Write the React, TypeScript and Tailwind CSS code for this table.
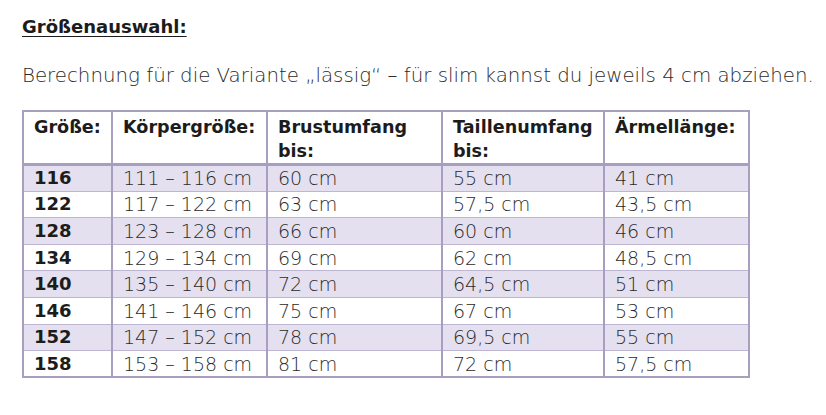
const rows: Array<[string, string, string, string, string]> = [
  ["116", "111 – 116 cm", "60 cm", "55 cm", "41 cm"],
  ["122", "117 – 122 cm", "63 cm", "57,5 cm", "43,5 cm"],
  ["128", "123 – 128 cm", "66 cm", "60 cm", "46 cm"],
  ["134", "129 – 134 cm", "69 cm", "62 cm", "48,5 cm"],
  ["140", "135 – 140 cm", "72 cm", "64,5 cm", "51 cm"],
  ["146", "141 – 146 cm", "75 cm", "67 cm", "53 cm"],
  ["152", "147 – 152 cm", "78 cm", "69,5 cm", "55 cm"],
  ["158", "153 – 158 cm", "81 cm", "72 cm", "57,5 cm"],
];

const widths = ["w-[89px]", "w-[155px]", "w-[175px]", "w-[162px]", "w-[145px]"];

export default function App() {
  return (
    <div className="w-[826px] h-[415px] bg-white text-[#1c1c1c] font-['DejaVu_Sans',sans-serif] pl-[22px] pt-[14px]">
      <h2 className="text-[18px] font-bold underline underline-offset-[3px] leading-[26px]">
        Größenauswahl:
      </h2>
      <p className="mt-[23px] text-[19.8px] leading-[26px] font-extralight text-[#2a2a2a] whitespace-nowrap">
        Berechnung für die Variante „lässig“ – für slim kannst du jeweils 4 cm abziehen.
      </p>

      <table className="mt-[21px] w-[726px] table-fixed border-collapse border-2 border-[#a89fc0]">
        <thead>
          <tr className="border-b-[3px] border-[#a89fc0] align-top">
            {["Größe:", "Körpergröße:", "Brustumfang bis:", "Taillenumfang bis:", "Ärmellänge:"].map((h, i) => (
              <th
                key={h}
                className={`${widths[i]} h-[50px] border-x-2 border-[#a89fc0] pl-[10px] pr-[4px] pt-[3px] text-left text-[17.6px] font-bold leading-[24px]`}
              >
                {h}
              </th>
            ))}
          </tr>
        </thead>
        <tbody>
          {rows.map((row, r) => (
            <tr key={row[0]} className={`border-b border-[#bdb5d2] ${r % 2 === 0 ? "bg-[#e4e0ef]" : "bg-white"}`}>
              {row.map((cell, i) => (
                <td
                  key={i}
                  className={`h-[26.6px] border-x-2 border-[#a89fc0] px-[10px] py-0 leading-[24px] whitespace-nowrap ${
                    i === 0 ? "font-bold text-[18px]" : "font-extralight text-[19px] text-[#2a2a2a]"
                  }`}
                >
                  {cell}
                </td>
              ))}
            </tr>
          ))}
        </tbody>
      </table>
    </div>
  );
}
